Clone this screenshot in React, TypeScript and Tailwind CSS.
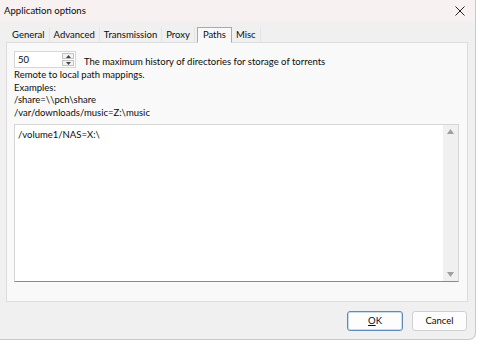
import { useState } from "react"

const tabs = ["General", "Advanced", "Transmission", "Proxy", "Paths", "Misc"]

function SpinBox({ value }: { value: string }) {
  return (
    <div className="flex h-[17px] w-[62px] items-stretch border border-[#d6d6d6] bg-white">
      <span className="flex-1 pl-[3px] leading-[15px]">{value}</span>
      <div className="my-[1px] mr-[1px] flex w-[12px] flex-col gap-[1px]">
        <div className="flex flex-1 items-center justify-center border border-[#c4c4c4] bg-[#f3f3f3]">
          <svg width="5" height="3" viewBox="0 0 5 3">
            <path d="M0 3 L2.5 0 L5 3 Z" fill="#444" />
          </svg>
        </div>
        <div className="flex flex-1 items-center justify-center border border-[#c4c4c4] bg-[#f3f3f3]">
          <svg width="5" height="3" viewBox="0 0 5 3">
            <path d="M0 0 L2.5 3 L5 0 Z" fill="#444" />
          </svg>
        </div>
      </div>
    </div>
  )
}

export default function App() {
  const [activeTab, setActiveTab] = useState("Paths")
  const [mappings, setMappings] = useState("/volume1/NAS=X:\\")

  return (
    <div
      className="h-[344px] w-[480px] bg-white text-[9.5px] text-[#0c0c0c]"
      style={{ fontFamily: 'Lato, "Noto Sans", sans-serif' }}
    >
      <div className="flex h-[340px] w-[476px] flex-col rounded-br-[7px] border-r border-b border-[#c9c9c9] bg-[#f0f0f0]">
        {/* title bar */}
        <div className="flex h-[22px] items-center justify-between bg-[#f7f1f1] pl-[4px] pr-[10px]">
          <span className="text-[9.6px]">Application options</span>
          <svg width="10" height="10" viewBox="0 0 10 10">
            <path d="M0.5 0.5 L9.5 9.5 M9.5 0.5 L0.5 9.5" stroke="#222" strokeWidth="1" />
          </svg>
        </div>

        {/* tabs */}
        <div className="mt-[5px] flex h-[15px] items-end pl-[8px]">
          {tabs.map((tab) => {
            const selected = tab === activeTab
            return (
              <button
                className={
                  selected
                    ? "relative z-10 -mb-[1px] ml-[2px] h-[16px] border border-[#a9a9a9] border-b-[#f9f9f9] bg-[#f9f9f9] px-[5px] leading-[14px]"
                    : "h-[15px] border-r border-[#e4e4e4] px-[4px] leading-[14px]"
                }
                key={tab}
                onClick={() => setActiveTab(tab)}
                type="button"
              >
                {tab}
              </button>
            )
          })}
        </div>

        {/* panel */}
        <div className="mx-[6px] flex h-[260px] w-[462px] flex-col border border-[#dcdcdc] bg-[#f9f9f9] pl-[7px] pr-[8px] pt-[8px]">
          <div className="flex items-end gap-[8px]">
            <SpinBox value="50" />
            <span className="leading-[13px]">
              The maximum history of directories for storage of torrents
            </span>
          </div>
          <div className="mt-[1px] leading-[12.5px]">
            <div>Remote to local path mappings.</div>
            <div>Examples:</div>
            <div>/share=\\pch\share</div>
            <div>/var/downloads/music=Z:\music</div>
          </div>
          <div className="mt-[5px] flex h-[158px] border border-[#d6d6d6] border-b-[#8a8a8a] bg-white">
            <textarea
              className="flex-1 resize-none bg-white px-[3px] pt-[3px] leading-[14px] outline-none"
              onChange={(e) => setMappings(e.target.value)}
              spellCheck={false}
              value={mappings}
            />
            <div className="flex w-[15px] flex-col items-center justify-between bg-[#f0f0f0] py-[4px]">
              <svg width="7" height="5" viewBox="0 0 7 5">
                <path d="M0 5 L3.5 0 L7 5 Z" fill="#a0a0a0" />
              </svg>
              <svg width="7" height="5" viewBox="0 0 7 5">
                <path d="M0 0 L3.5 5 L7 0 Z" fill="#a0a0a0" />
              </svg>
            </div>
          </div>
        </div>

        {/* buttons */}
        <div className="mt-[9px] flex justify-end gap-[9px] pr-[8px]">
          <button
            className="h-[20px] w-[56px] rounded-[3px] border border-[#5b8db8] bg-[#fdfdfd] shadow-[inset_0_0_0_1px_#c8dcec]"
            type="button"
          >
            <span className="underline underline-offset-1">O</span>K
          </button>
          <button
            className="h-[20px] w-[55px] rounded-[3px] border border-[#d0d0d0] bg-[#fdfdfd]"
            type="button"
          >
            Cancel
          </button>
        </div>
      </div>
    </div>
  )
}
